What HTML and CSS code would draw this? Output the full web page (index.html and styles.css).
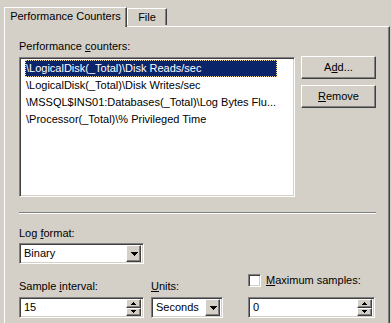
FILE: index.html
```html
<!DOCTYPE html>
<html lang="en">
<head>
    <meta charset="UTF-8">
    <meta name="viewport" content="width=device-width, initial-scale=1.0">
    <title>Performance Counters</title>
    <link rel="stylesheet" href="styles.css">
</head>
<body>
    <div class="tabs">
        <div class="tab active">Performance Counters</div>
        <div class="tab file">File</div>
    </div>

    <div class="panel">
        <div class="label">Performance <u>c</u>ounters:</div>
        <div class="counters">
            <div class="listbox">
                <div class="item selected">\LogicalDisk(_Total)\Disk Reads/sec</div>
                <div class="item">\LogicalDisk(_Total)\Disk Writes/sec</div>
                <div class="item">\MSSQL$INS01:Databases(_Total)\Log Bytes Flu...</div>
                <div class="item">\Processor(_Total)\% Privileged Time</div>
            </div>
            <div class="buttons">
                <button class="btn">A<u>d</u>d...</button>
                <button class="btn"><u>R</u>emove</button>
            </div>
        </div>

        <div class="separator"></div>

        <div class="label format-label">Log <u>f</u>ormat:</div>
        <div class="combo format">
            <span class="value">Binary</span>
            <span class="drop"><svg width="7" height="4" viewBox="0 0 7 4"><path d="M0 0h7v1h-1v1h-1v1h-1v1h-1v-1h-1v-1h-1v-1h-1z"/></svg></span>
        </div>

        <div class="bottom">
            <div class="field interval">
                <div class="label">Sample <u>i</u>nterval:</div>
                <div class="edit">
                    <span class="value">15</span>
                    <span class="spin">
                        <span class="half"><svg width="5" height="3" viewBox="0 0 5 3"><path d="M2 0h1v1h1v1h1v1H0V2h1V1h1z"/></svg></span>
                        <span class="half"><svg width="5" height="3" viewBox="0 0 5 3"><path d="M0 0h5v1h-1v1h-1v1h-1V2H1V1H0z"/></svg></span>
                    </span>
                </div>
            </div>
            <div class="field units">
                <div class="label"><u>U</u>nits:</div>
                <div class="combo">
                    <span class="value">Seconds</span>
                    <span class="drop"><svg width="7" height="4" viewBox="0 0 7 4"><path d="M0 0h7v1h-1v1h-1v1h-1v1h-1v-1h-1v-1h-1v-1h-1z"/></svg></span>
                </div>
            </div>
            <div class="field samples">
                <div class="check"><span class="box"></span><span><u>M</u>aximum samples:</span></div>
                <div class="edit">
                    <span class="value">0</span>
                    <span class="spin">
                        <span class="half"><svg width="5" height="3" viewBox="0 0 5 3"><path d="M2 0h1v1h1v1h1v1H0V2h1V1h1z"/></svg></span>
                        <span class="half"><svg width="5" height="3" viewBox="0 0 5 3"><path d="M0 0h5v1h-1v1h-1v1h-1V2H1V1H0z"/></svg></span>
                    </span>
                </div>
            </div>
        </div>
    </div>
</body>
</html>
```

FILE: styles.css
```css
* {
    box-sizing: border-box;
}
body {
    margin: 0;
    width: 391px;
    height: 323px;
    overflow: hidden;
    background: #d4d0c8;
    font-family: "Liberation Sans", Arial, sans-serif;
    font-size: 11px;
    line-height: 13px;
    color: #000;
}
u {
    text-decoration: underline;
    text-underline-offset: 1px;
}
.tabs {
    display: flex;
    align-items: flex-end;
    height: 26px;
    padding: 7px 0 0 4px;
}
.tab {
    text-align: center;
    white-space: nowrap;
    background: #d4d0c8;
    border-top: 1px solid #fff;
    border-left: 1px solid #fff;
    border-right: 1px solid #404040;
    box-shadow: inset -1px 0 #808080;
    padding-top: 2px;
}
.tab.active {
    width: 123px;
    height: 20px;
    margin-bottom: -1px;
    position: relative;
    z-index: 1;
}
.tab.file {
    width: 40px;
    height: 17px;
    margin-bottom: 1px;
}
.panel {
    width: 386px;
    margin-left: 4px;
    border-top: 1px solid #fff;
    border-left: 1px solid #fff;
    border-right: 1px solid #404040;
    box-shadow: inset -1px 0 #808080;
    padding: 13px 13px 20px 14px;
}
.counters {
    display: flex;
    gap: 6px;
    margin-top: 4px;
}
.listbox, .edit, .combo, .box {
    background: #fff;
    border: 1px solid;
    border-color: #808080 #fff #fff #808080;
    box-shadow: inset 1px 1px #404040, inset -1px -1px #d4d0c8;
}
.listbox {
    width: 276px;
    height: 140px;
    padding: 2px 0 0 5px;
}
.item {
    width: 252px;
    height: 17px;
    line-height: 17px;
    padding-left: 1px;
    white-space: nowrap;
    overflow: hidden;
}
.item.selected {
    background: #0a246a;
    color: #fff;
    outline: 1px dotted #f5db95;
    outline-offset: -1px;
}
.buttons {
    display: flex;
    flex-direction: column;
    gap: 6px;
    margin-top: -1px;
}
.btn, .half, .drop {
    background: #d4d0c8;
    border: 1px solid;
    border-color: #fff #404040 #404040 #fff;
    box-shadow: inset -1px -1px #808080;
}
.btn {
    width: 75px;
    height: 23px;
    padding: 0;
    font: inherit;
    color: #000;
}
.separator {
    height: 2px;
    margin-top: 15px;
    border-top: 1px solid #808080;
    border-bottom: 1px solid #fff;
}
.format-label {
    margin-top: 13px;
}
.combo, .edit {
    display: flex;
    align-items: center;
    height: 21px;
    padding: 2px;
}
.combo.format {
    width: 125px;
    margin-top: 3px;
}
.value {
    flex: 1;
    padding-left: 2px;
    white-space: nowrap;
}
.drop {
    width: 15px;
    height: 17px;
    display: flex;
    align-items: center;
    justify-content: center;
    padding-left: 1px;
}
.spin {
    width: 15px;
    height: 17px;
    display: flex;
    flex-direction: column;
}
.half {
    flex: 1;
    display: flex;
    align-items: center;
    justify-content: center;
}
.bottom {
    display: flex;
    align-items: flex-end;
    margin-top: 10px;
}
.field .label {
    margin-bottom: 4px;
}
.interval {
    width: 125px;
}
.units {
    width: 72px;
    margin-left: 7px;
}
.samples {
    width: 127px;
    margin-left: 25px;
}
.check {
    display: flex;
    align-items: center;
    gap: 5px;
    height: 13px;
    margin-bottom: 10px;
    white-space: nowrap;
}
.box {
    width: 13px;
    height: 13px;
}
```
